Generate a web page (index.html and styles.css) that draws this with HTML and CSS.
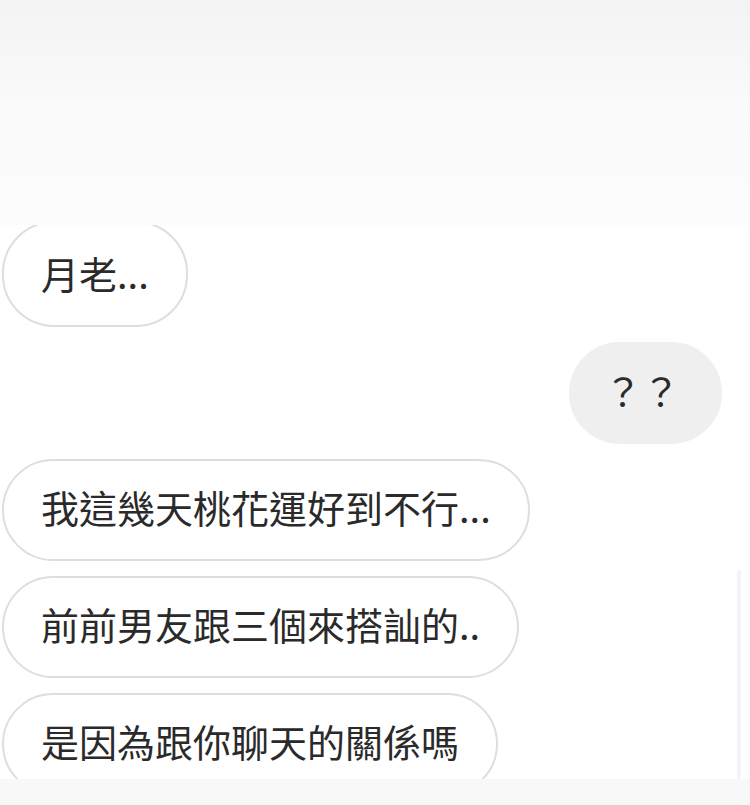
FILE: index.html
```html
<!DOCTYPE html>
<html lang="zh-Hant">
<head>
<meta charset="utf-8">
<link rel="stylesheet" href="styles.css">
</head>
<body>
<div class="screen">
  <div class="header"></div>
  <div class="chat">
    <div class="row left first"><div class="bubble">月老...</div></div>
    <div class="row right"><div class="bubble me">？？</div></div>
    <div class="row left"><div class="bubble">我這幾天桃花運好到不行...</div></div>
    <div class="row left"><div class="bubble">前前男友跟三個來搭訕的..</div></div>
    <div class="row left"><div class="bubble">是因為跟你聊天的關係嗎</div></div>
    <div class="scrollbar"></div>
  </div>
  <div class="footer"></div>
</div>
</body>
</html>
```
FILE: styles.css
```css
html, body {
  margin: 0;
  padding: 0;
  background: #ffffff;
}
.screen {
  width: 750px;
  height: 805px;
  display: flex;
  flex-direction: column;
  overflow: hidden;
  font-family: "Noto Sans CJK TC", "Noto Sans", sans-serif;
  color: #2a2a2a;
}
.header {
  height: 225px;
  flex: none;
  background: linear-gradient(to bottom, #f3f3f3 0%, #fafafa 45%, #fcfcfc 100%);
}
.chat {
  position: relative;
  flex: 1;
  overflow: hidden;
  background: #ffffff;
  padding: 0 0 0 2px;
}
.row {
  display: flex;
  margin-bottom: 15px;
}
.row.first {
  margin-top: -4px;
}
.row.first .bubble {
  padding-top: 23px;
}
.row.right {
  justify-content: flex-end;
  padding-right: 28px;
}
.bubble {
  font-size: 38px;
  line-height: 54px;
  padding: 19px 37px 25px;
  border: 2px solid #dedede;
  border-radius: 52px;
  background: #ffffff;
  white-space: nowrap;
}
.bubble.me {
  background: #efefef;
  border-color: #efefef;
  padding: 19px 40px 25px 33px;
}
.scrollbar {
  position: absolute;
  right: 9px;
  top: 345px;
  width: 4px;
  bottom: 0;
  background: #f4f4f4;
  border-radius: 2px;
}
.footer {
  height: 26px;
  flex: none;
  background: #f8f8f8;
}
```
